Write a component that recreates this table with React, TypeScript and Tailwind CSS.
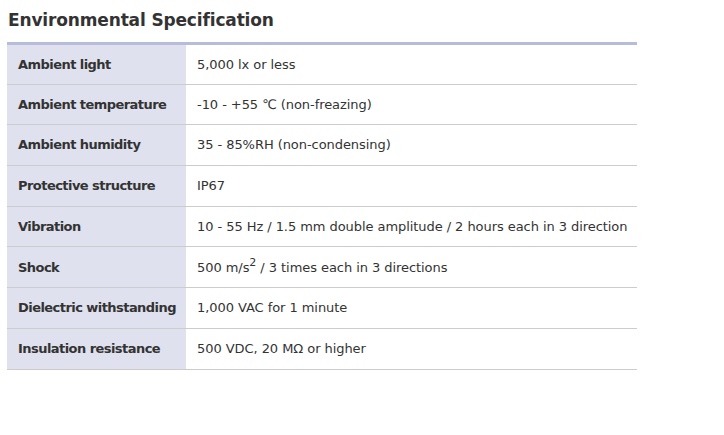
const ROWS: { label: string; value: React.ReactNode }[] = [
  { label: "Ambient light", value: "5,000 lx or less" },
  { label: "Ambient temperature", value: "-10 - +55 ℃ (non-freazing)" },
  { label: "Ambient humidity", value: "35 - 85%RH (non-condensing)" },
  { label: "Protective structure", value: "IP67" },
  { label: "Vibration", value: "10 - 55 Hz / 1.5 mm double amplitude / 2 hours each in 3 direction" },
  {
    label: "Shock",
    value: (
      <>
        500 m/s<sup className="text-[11px] relative -top-[6px]">2</sup> / 3 times each in 3 directions
      </>
    ),
  },
  { label: "Dielectric withstanding", value: "1,000 VAC for 1 minute" },
  { label: "Insulation resistance", value: "500 VDC, 20 MΩ or higher" },
];

export default function App() {
  return (
    <div className="min-h-[435px] bg-white px-[7px] pt-[8px] font-['DejaVu_Sans',Verdana,sans-serif] text-[#333333]">
      <h2 className="pl-[1px] text-[17px] font-bold leading-[24px] tracking-[-0.15px]">Environmental Specification</h2>
      <table className="mt-[10px] w-[630px] border-collapse border-t-[3px] border-[#b8bcdb] text-[13px]">
        <tbody>
          {ROWS.map((r) => (
            <tr key={r.label} className="h-[40.7px] border-b border-[#cccccc]">
              <th className="w-[179px] whitespace-nowrap bg-[#dfe1ee] pl-[11px] text-left font-bold tracking-[-0.55px]">
                {r.label}
              </th>
              <td className="whitespace-nowrap pl-[11px] tracking-[-0.06px]">{r.value}</td>
            </tr>
          ))}
        </tbody>
      </table>
    </div>
  );
}
